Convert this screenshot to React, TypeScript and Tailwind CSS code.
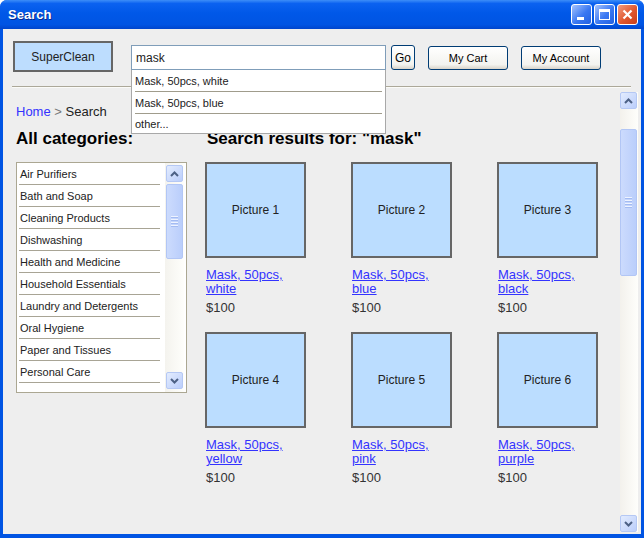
import React from "react";

const categories = [
  "Air Purifiers",
  "Bath and Soap",
  "Cleaning Products",
  "Dishwashing",
  "Health and Medicine",
  "Household Essentials",
  "Laundry and Detergents",
  "Oral Hygiene",
  "Paper and Tissues",
  "Personal Care",
];

const products = [
  { pic: "Picture 1", color: "white" },
  { pic: "Picture 2", color: "blue" },
  { pic: "Picture 3", color: "black" },
  { pic: "Picture 4", color: "yellow" },
  { pic: "Picture 5", color: "pink" },
  { pic: "Picture 6", color: "purple" },
];

function Chevron({ dir }: { dir: "up" | "down" }) {
  return (
    <svg width="9" height="6" viewBox="0 0 9 6">
      <path
        d={dir === "up" ? "M1 5L4.5 1.5L8 5" : "M1 1L4.5 4.5L8 1"}
        fill="none"
        stroke="#4D6185"
        strokeWidth="2"
      />
    </svg>
  );
}

function ScrollButton({ dir }: { dir: "up" | "down" }) {
  return (
    <div className="w-[17px] h-[17px] shrink-0 rounded-[2px] border border-[#B5C8F4] bg-[linear-gradient(135deg,#E3ECFE,#BBCEFB)] flex items-center justify-center">
      <Chevron dir={dir} />
    </div>
  );
}

function Thumb({ h }: { h: string }) {
  return (
    <div
      className={`${h} w-[17px] shrink-0 rounded-[2px] border border-[#B2C6F5] bg-[linear-gradient(to_right,#CCDBFD,#BACEFB)] flex flex-col items-center justify-center gap-px`}
    >
      {[0, 1, 2, 3].map((i) => (
        <div key={i} className="w-[7px] h-px bg-[#EEF3FF] border-b border-[#A3BBF2] box-content" />
      ))}
    </div>
  );
}

function TitleButton({ kind }: { kind: "min" | "max" | "close" }) {
  if (kind === "close") {
    return (
      <div className="w-[21px] h-[21px] rounded-[3px] border border-white bg-[linear-gradient(135deg,#F39C80,#E0572F_55%,#C83E1A)] flex items-center justify-center">
        <svg width="11" height="11" viewBox="0 0 11 11">
          <path d="M1.5 1.5L9.5 9.5M9.5 1.5L1.5 9.5" stroke="white" strokeWidth="2.2" />
        </svg>
      </div>
    );
  }
  return (
    <div className="w-[21px] h-[21px] rounded-[3px] border border-white bg-[linear-gradient(135deg,#A5C3FD,#3A78F2_55%,#2160E2)] relative flex items-center justify-center">
      {kind === "min" ? (
        <div className="absolute left-[5px] bottom-[4px] w-[7px] h-[3px] bg-white" />
      ) : (
        <div className="w-[11px] h-[11px] border border-white border-t-[3px]" />
      )}
    </div>
  );
}

const xpBtn =
  "border border-[#003C74] rounded-[3px] bg-[linear-gradient(to_bottom,#FFFFFF,#F3F3EF_80%,#D9D4C9)] flex items-center justify-center text-black";

export default function App() {
  return (
    <div className="w-[644px] h-[538px] bg-white font-['Liberation_Sans',Arial,sans-serif]">
      <div className="w-full h-full flex flex-col rounded-t-[7px] overflow-hidden bg-[#0054E3]">
        {/* title bar */}
        <div className="h-[29px] shrink-0 flex items-center pl-[8px] pr-[6px] bg-[linear-gradient(to_bottom,#3D8EF8_0%,#0B62F0_12%,#0058E8_45%,#0054E3_85%,#0045CC_100%)]">
          <span className="text-white font-bold text-[13px] leading-none [text-shadow:1px_1px_0_#0B2A8C]">
            Search
          </span>
          <div className="ml-auto flex gap-[2px]">
            <TitleButton kind="min" />
            <TitleButton kind="max" />
            <TitleButton kind="close" />
          </div>
        </div>

        {/* body */}
        <div className="flex-1 mx-[3px] mb-[4px] bg-[#EEEEEE] flex flex-col min-h-0">
          {/* header */}
          <div className="h-[57px] shrink-0 flex items-start pl-[10px] relative z-10">
            <div className="mt-[12px] w-[100px] h-[31px] border-2 border-[#666666] bg-[#BDDDFE] flex items-center justify-center text-[12px] text-[#222]">
              SuperClean
            </div>
            <div className="relative mt-[16px] ml-[18px] w-[255px] h-[25px]">
              <div className="w-full h-full border border-[#7F9DB9] bg-white pl-[4px] flex items-center text-[12px] text-[#222]">
                mask
              </div>
              <div className="absolute left-0 top-full w-full h-[64px] bg-white border-x border-b border-[#A8A8A8] flex flex-col text-[11px] text-[#222]">
                <div className="h-[22px] mx-[3px] border-b border-[#A09C8C] flex items-center pt-px">Mask, 50pcs, white</div>
                <div className="h-[22px] mx-[3px] border-b border-[#A09C8C] flex items-center pt-px">Mask, 50pcs, blue</div>
                <div className="flex-1 mx-[3px] flex items-center pt-px">other...</div>
              </div>
            </div>
            <div className={`mt-[16px] ml-[5px] w-[24px] h-[25px] text-[12px] ${xpBtn}`}>Go</div>
            <div className={`mt-[17px] ml-[13px] w-[80px] h-[24px] text-[11px] ${xpBtn}`}>My Cart</div>
            <div className={`mt-[17px] ml-[13px] w-[80px] h-[24px] text-[11px] ${xpBtn}`}>My Account</div>
          </div>
          <div className="shrink-0 ml-[9px] mr-[10px] h-px bg-[#ACA899]" />
          <div className="shrink-0 ml-[9px] mr-[10px] h-px bg-[#FBFBF8]" />

          {/* scroll area */}
          <div className="flex-1 flex min-h-0">
            <div className="flex-1 pl-[13px] pt-[16px] overflow-hidden">
              <div className="text-[13px] leading-[15px]">
                <span className="text-[#3333FF]">Home</span>
                <span className="text-[#777]"> &gt; </span>
                <span className="text-[#222]">Search</span>
              </div>
              <div className="mt-[10px] flex items-start">
                <div className="w-[171px] shrink-0">
                  <h2 className="text-[17px] leading-[19px] font-bold text-black">All categories:</h2>
                  <div className="mt-[14px] h-[231px] border border-[#ABA792] bg-white flex">
                    <div className="ml-[2px] w-[141px]">
                      {categories.map((c) => (
                        <div
                          key={c}
                          className="h-[22px] border-b border-[#A8A495] pl-[1px] pt-px flex items-center text-[11px] text-[#222]"
                        >
                          {c}
                        </div>
                      ))}
                    </div>
                    <div className="ml-[5px] w-[19px] pt-[2px] pb-[3px] flex flex-col items-center bg-[linear-gradient(to_right,#F4F3EE,#FEFEFB)]">
                      <ScrollButton dir="up" />
                      <div className="h-[2px] shrink-0" />
                      <Thumb h="h-[75px]" />
                      <div className="flex-1" />
                      <ScrollButton dir="down" />
                    </div>
                  </div>
                </div>
                <div className="ml-[18px]">
                  <h2 className="ml-[2px] text-[17px] leading-[19px] font-bold text-black">
                    Search results for: "mask"
                  </h2>
                  <div className="mt-[14px] grid grid-cols-[146px_146px_101px] gap-y-[17px]">
                    {products.map((p) => (
                      <div key={p.pic} className="w-[101px]">
                        <div className="w-[101px] h-[96px] border-2 border-[#666666] bg-[#BBDDFF] flex items-center justify-center text-[12px] text-[#222]">
                          {p.pic}
                        </div>
                        <div className="mt-[10px] ml-[1px] text-[13px] leading-[14px] text-[#3333FF] underline">
                          Mask, 50pcs, {p.color}
                        </div>
                        <div className="mt-[4px] ml-[1px] text-[13px] leading-[15px] text-[#333]">$100</div>
                      </div>
                    ))}
                  </div>
                </div>
              </div>
            </div>
            <div className="w-[18px] mr-[3px] mt-[4px] mb-[2px] flex flex-col items-start bg-[linear-gradient(to_right,#F3F1EC,#FEFEFB)]">
              <ScrollButton dir="up" />
              <div className="h-[20px] shrink-0" />
              <Thumb h="h-[147px]" />
              <div className="flex-1" />
              <ScrollButton dir="down" />
            </div>
          </div>
        </div>
      </div>
    </div>
  );
}
